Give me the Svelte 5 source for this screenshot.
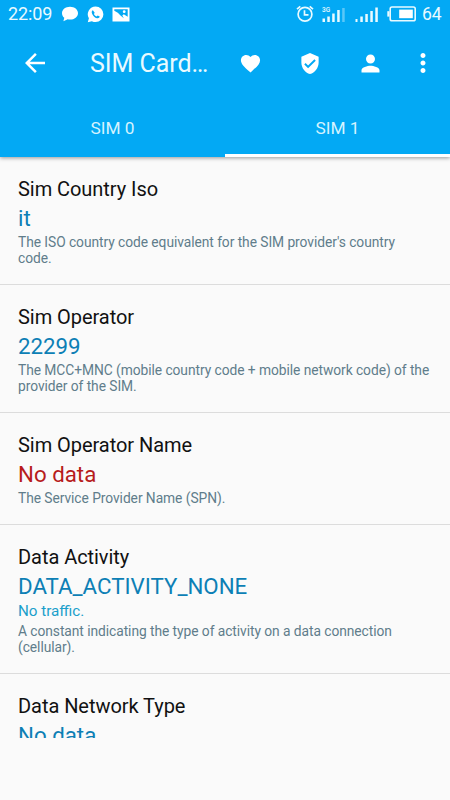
<script lang="ts">
	type Item = {
		title: string;
		value: string;
		note?: string;
		text?: string;
		missing?: boolean;
	};

	const tabs = ['SIM 0', 'SIM 1'];
	let active = $state(1);

	const items: Item[] = [
		{
			title: 'Sim Country Iso',
			value: 'it',
			text: "The ISO country code equivalent for the SIM provider's country code."
		},
		{
			title: 'Sim Operator',
			value: '22299',
			text: 'The MCC+MNC (mobile country code + mobile network code) of the provider of the SIM.'
		},
		{
			title: 'Sim Operator Name',
			value: 'No data',
			text: 'The Service Provider Name (SPN).',
			missing: true
		},
		{
			title: 'Data Activity',
			value: 'DATA_ACTIVITY_NONE',
			note: 'No traffic.',
			text: 'A constant indicating the type of activity on a data connection (cellular).'
		},
		{ title: 'Data Network Type', value: 'No data' }
	];
</script>

<div class="screen">
	<header>
		<div class="status">
			<span class="clock">22:09</span>
			<svg class="chat" width="18" height="16" viewBox="0 0 18 16">
				<path d="M9 .8c4.500 0 8 2.800 8 6.400s-3.500 6.400-8 6.400c-.8 0-1.600-.1-2.300-.3L2.400 15.200l.9-3.400C1.800 10.600 1 9 1 7.200 1 3.600 4.500.8 9 .8z" fill="#fff" />
			</svg>
			<svg class="phone" width="17" height="17" viewBox="0 0 17 17">
				<path d="M8.600.5a7.800 7.800 0 0 1 0 15.600c-1.300 0-2.600-.3-3.700-.9L.8 16.300l1.100-4A7.800 7.800 0 0 1 8.600.5z" fill="#fff" />
				<path d="M5.900 4.300c-1.300.6-1.500 2-.7 3.600 1 2.100 2.600 3.600 4.700 4.300 1.400.4 2.600-.2 2.800-1.600l-2-1.200-1.200 1.100c-1.100-.5-2.100-1.400-2.600-2.500l.8-1.200z" fill="#03a9f4" />
			</svg>
			<svg class="photo" width="18" height="15" viewBox="0 0 18 15">
				<rect x=".5" y=".5" width="17" height="14" fill="#fff" />
				<path d="M2.300 2.300h13.400v7.500l-3.900-2.600-1.500 1.200 1.500 2.800-3.300-2.800-2.700-2.700-3.500-1.900z" fill="#03a9f4" />
				<circle cx="12.200" cy="4.700" r="1.400" fill="#fff" />
			</svg>

			<svg class="alarm" width="18" height="18" viewBox="0 0 18 18" fill="none" stroke="#e9faff">
				<circle cx="9" cy="9.300" r="6.900" stroke-width="1.700" />
				<path d="M8.500 5.300v4.500h4" stroke-width="1.700" />
				<path d="M1 4.200L4.300 1.300M17 4.200l-3.300-2.900" stroke-width="1.700" />
			</svg>
			<svg class="signal" width="24" height="17" viewBox="0 0 24 17">
				<text x="0" y="6">3G</text>
				<path d="M.5 12.500h2.500V16H.5zM5.300 10.500h2.500V16H5.300zM10.200 7.500h2.500V16h-2.500zM15.200 4h2.500v12h-2.500z" fill="#e9faff" />
				<path d="M20.200 2h2.500v14h-2.500z" fill="#fff" opacity=".35" />
			</svg>
			<svg class="signal2" width="24" height="17" viewBox="0 0 24 17">
				<path d="M.5 13h2v3h-2zM5.300 10.500h2.500V16H5.300zM10.300 8h2.500v8h-2.500zM15.300 5h2.500v11h-2.500zM20.300 1.500h2.500V16h-2.500z" fill="#e9faff" />
			</svg>
			<svg class="battery" width="30" height="16" viewBox="0 0 30 16">
				<rect x="3.200" y="1" width="25" height="13.800" rx="1.800" fill="none" stroke="#e9faff" stroke-width="1.600" />
				<path d="M.3 5.200h2.200v5.400H.3z" fill="#e9faff" />
				<path d="M12.200 3.600h13.600v8.600H12.200z" fill="#fff" />
			</svg>
			<span class="percent">64</span>
		</div>

		<div class="toolbar">
			<svg class="back" width="30" height="30" viewBox="0 0 24 24">
				<path d="M20 11H7.830l5.590-5.590L12 4l-8 8 8 8 1.410-1.410L7.830 13H20v-2z" />
			</svg>
			<h1>SIM Card…</h1>
			<svg class="heart" width="23" height="23" viewBox="0 0 24 24">
				<path d="M12 21.350l-1.450-1.320C5.400 15.360 2 12.280 2 8.500 2 5.420 4.420 3 7.500 3c1.740 0 3.410.81 4.500 2.090C13.090 3.810 14.760 3 16.500 3 19.580 3 22 5.420 22 8.500c0 3.780-3.400 6.860-8.550 11.540L12 21.350z" />
			</svg>
			<svg class="shield" width="24" height="23" viewBox="0 0 24 24">
				<path d="M12 1L3 5v6c0 5.550 3.840 10.740 9 12 5.160-1.260 9-6.450 9-12V5l-9-4zm-2 16l-4-4 1.410-1.410L10 14.170l6.590-6.590L18 9l-8 8z" />
			</svg>
			<svg class="person" width="27" height="27" viewBox="0 0 24 24">
				<path d="M12 12c2.210 0 4-1.790 4-4s-1.790-4-4-4-4 1.790-4 4 1.790 4 4 4zm0 2c-2.670 0-8 1.340-8 4v2h16v-2c0-2.660-5.330-4-8-4z" />
			</svg>
			<svg class="more" width="30" height="30" viewBox="0 0 24 24">
				<path d="M12 8c1.100 0 2-.9 2-2s-.9-2-2-2-2 .9-2 2 .9 2 2 2zm0 2c-1.100 0-2 .9-2 2s.9 2 2 2 2-.9 2-2-.9-2-2-2zm0 6c-1.100 0-2 .9-2 2s.9 2 2 2 2-.9 2-2-.9-2-2-2z" />
			</svg>
		</div>

		<nav>
			{#each tabs as tab, i}
				<button class:active={active === i} onclick={() => (active = i)}>{tab}</button>
			{/each}
		</nav>
	</header>

	<main>
		{#each items as item}
			<section>
				<h2>{item.title}</h2>
				<p class="value" class:missing={item.missing}>{item.value}</p>
				{#if item.note}
					<p class="note">{item.note}</p>
				{/if}
				{#if item.text}
					<p class="text">{item.text}</p>
				{/if}
			</section>
		{/each}
	</main>
</div>

<style>
	:global(body) {
		margin: 0;
		background: #fafafa;
	}

	.screen {
		width: 450px;
		height: 800px;
		overflow: hidden;
		background: #fafafa;
		font-family: Roboto, sans-serif;
		display: flex;
		flex-direction: column;
	}

	header {
		height: 157px;
		flex-shrink: 0;
		background: #03a9f4;
		color: #e9faff;
		box-shadow: 0 1px 4px rgba(0, 0, 0, 0.4);
		position: relative;
		z-index: 1;
	}

	.status {
		height: 28px;
		display: flex;
		align-items: center;
	}

	.status svg {
		flex-shrink: 0;
	}

	.clock {
		width: 45px;
		margin-left: 8px;
		font-size: 18px;
		line-height: 20px;
		letter-spacing: -0.1px;
		white-space: nowrap;
	}

	.chat {
		margin-left: 8px;
	}

	.phone {
		margin-left: 8px;
	}

	.photo {
		margin-left: 8px;
	}

	.alarm {
		margin-left: auto;
	}

	.signal {
		margin-left: 8px;
	}

	.signal text {
		font: 500 6.5px Roboto, sans-serif;
		fill: #e9faff;
	}

	.signal2 {
		margin-left: 9px;
	}

	.battery {
		margin-left: 8px;
	}

	.percent {
		width: 20px;
		margin: 0 8px 0 5px;
		font-size: 17.5px;
	}

	.toolbar {
		height: 70px;
		display: flex;
		align-items: center;
		padding: 0 12px 0 20px;
	}

	.toolbar svg {
		flex-shrink: 0;
		fill: #fff;
	}

	.toolbar .heart {
		margin-left: auto;
	}

	.toolbar .shield {
		margin-left: 36px;
	}

	.toolbar .person {
		margin-left: 35px;
	}

	.toolbar .more {
		margin-left: 24px;
	}

	h1 {
		margin: 0 0 0 40px;
		font-size: 25px;
		font-weight: 400;
		letter-spacing: -0.05px;
		white-space: nowrap;
	}

	nav {
		display: flex;
		height: 59px;
	}

	nav button {
		flex: 1;
		border: 0;
		border-bottom: 3px solid transparent;
		padding: 3px 0 0;
		background: none;
		color: #d5f3ff;
		font: 400 17.3px Roboto, sans-serif;
	}

	nav button.active {
		border-bottom-color: #fff;
	}

	/* the list stops above the empty strip at the bottom */
	main {
		height: 581px;
		overflow: hidden;
	}

	section {
		padding: 20px 18px 18px;
		border-bottom: 1px solid #dcdcdc;
	}

	h2 {
		margin: 0;
		font-size: 20px;
		line-height: 24px;
		font-weight: 400;
		letter-spacing: -0.05px;
		color: #111;
	}

	p {
		margin: 0;
	}

	.value {
		margin-top: 3px;
		font-size: 22.3px;
		line-height: 28px;
		color: #0d7fb5;
	}

	.value.missing {
		color: #b71c1c;
	}

	.note {
		padding-top: 1px;
		font-size: 15.2px;
		line-height: 20px;
		color: #1a9fcb;
	}

	.text {
		margin-top: 2px;
		padding-right: 2px;
		font-size: 13.8px;
		line-height: 16px;
		letter-spacing: -0.06px;
		color: #607d8b;
	}
</style>
